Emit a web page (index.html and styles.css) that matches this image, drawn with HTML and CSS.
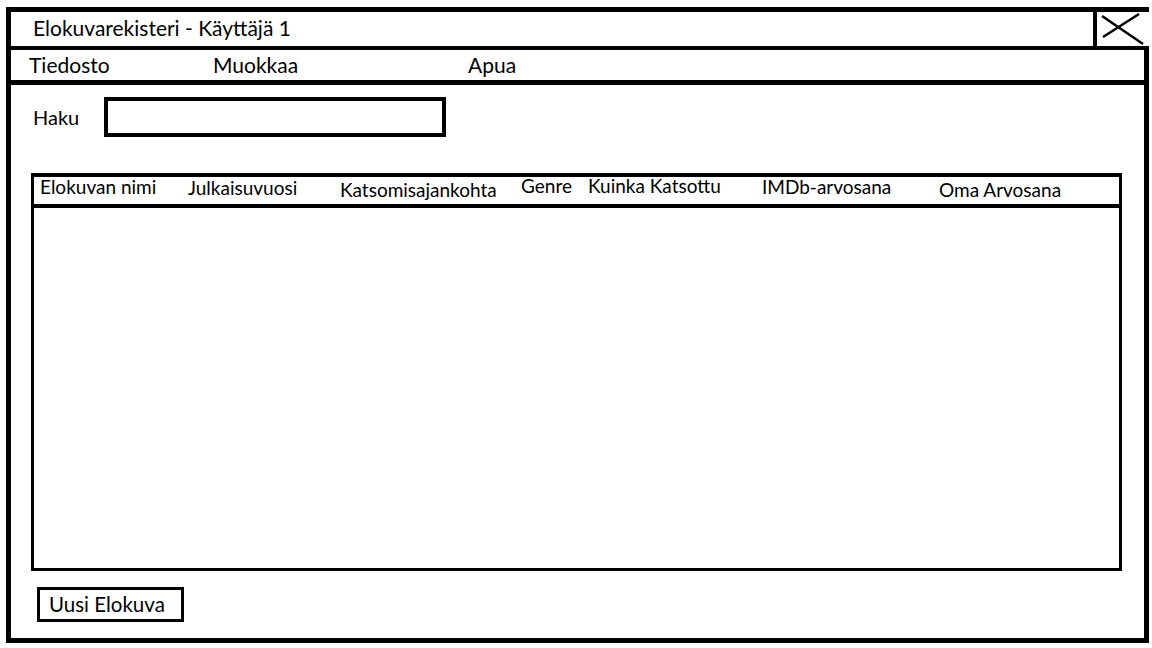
FILE: index.html
```html
<!DOCTYPE html>
<html lang="fi">
<head>
<meta charset="utf-8">
<title>Elokuvarekisteri</title>
<link rel="stylesheet" href="styles.css">
</head>
<body>
<div class="window">
  <div class="titlebar">
    <div class="title">Elokuvarekisteri - Käyttäjä 1</div>
    <div class="close">
      <svg width="47" height="34" viewBox="0 0 47 34">
        <line x1="5" y1="4" x2="46" y2="32" stroke="#000" stroke-width="2.5"/>
        <line x1="42" y1="2" x2="6" y2="25" stroke="#000" stroke-width="2.5"/>
      </svg>
    </div>
  </div>
  <div class="menubar">
    <span class="menu m1">Tiedosto</span>
    <span class="menu m2">Muokkaa</span>
    <span class="menu m3">Apua</span>
  </div>
  <div class="content">
    <div class="search">
      <span class="search-label">Haku</span>
      <div class="search-input"></div>
    </div>
    <div class="table">
      <div class="thead">
        <span class="th c1">Elokuvan nimi</span>
        <span class="th c2">Julkaisuvuosi</span>
        <span class="th c3">Katsomisajankohta</span>
        <span class="th c4">Genre</span>
        <span class="th c5">Kuinka Katsottu</span>
        <span class="th c6">IMDb-arvosana</span>
        <span class="th c7">Oma Arvosana</span>
      </div>
      <div class="tbody"></div>
    </div>
    <div class="actions">
      <div class="btn">Uusi Elokuva</div>
    </div>
  </div>
</div>
</body>
</html>
```

FILE: styles.css
```css
* { box-sizing: border-box; }
html, body {
  margin: 0;
  padding: 0;
  background: #fff;
}
body {
  font-family: Lato, "Open Sans", sans-serif;
  color: #000;
  width: 1152px;
  height: 648px;
  overflow: hidden;
}
.window {
  margin: 7px 0 0 6px;
  width: 1143px;
  height: 636px;
  border: 5px solid #000;
  border-right: none;
  display: flex;
  flex-direction: column;
}
.titlebar {
  height: 38px;
  border-bottom: 4px solid #000;
  display: flex;
}
.title {
  flex: 1;
  font-size: 21px;
  line-height: 31px;
  padding-left: 22px;
}
.close {
  width: 56px;
  border-left: 4px solid #000;
  display: flex;
  align-items: stretch;
}
.close svg { display: block; }
.menubar {
  height: 35px;
  border-bottom: 5px solid #000;
  border-right: 5px solid #000;
  display: grid;
  grid-template-columns: 184px 255px 1fr;
  padding-left: 18px;
  font-size: 21px;
  line-height: 30px;
}
.content {
  flex: 1;
  border-right: 5px solid #000;
  display: flex;
  flex-direction: column;
}
.search {
  display: flex;
  align-items: center;
  margin: 12px 0 0 22px;
}
.search-label {
  width: 71px;
  font-size: 20px;
}
.search-input {
  width: 342px;
  height: 40px;
  border: 4px solid #000;
}
.table {
  margin: 36px 0 0 20px;
  width: 1091px;
  height: 398px;
  border: 3px solid #000;
  border-top-width: 4px;
  display: flex;
  flex-direction: column;
}
.thead {
  height: 31px;
  border-bottom: 4px solid #000;
  display: grid;
  grid-template-columns: 148px 152px 181px 67px 174px 177px 1fr;
  align-items: start;
  padding-left: 6px;
  font-size: 19px;
  line-height: 18px;
}
.th { white-space: nowrap; }
.c1 { padding-top: 1px; }
.c2 { padding-top: 2px; }
.c3 { padding-top: 4px; }
.c4 { padding-top: 0; }
.c5 { padding-top: 0; }
.c6 { padding-top: 1px; }
.c7 { padding-top: 4px; }
.tbody { flex: 1; }
.actions {
  margin: 16px 0 0 26px;
}
.btn {
  width: 147px;
  height: 35px;
  border: 3px solid #000;
  padding-left: 9px;
  font-size: 20.5px;
  line-height: 29px;
}
```
